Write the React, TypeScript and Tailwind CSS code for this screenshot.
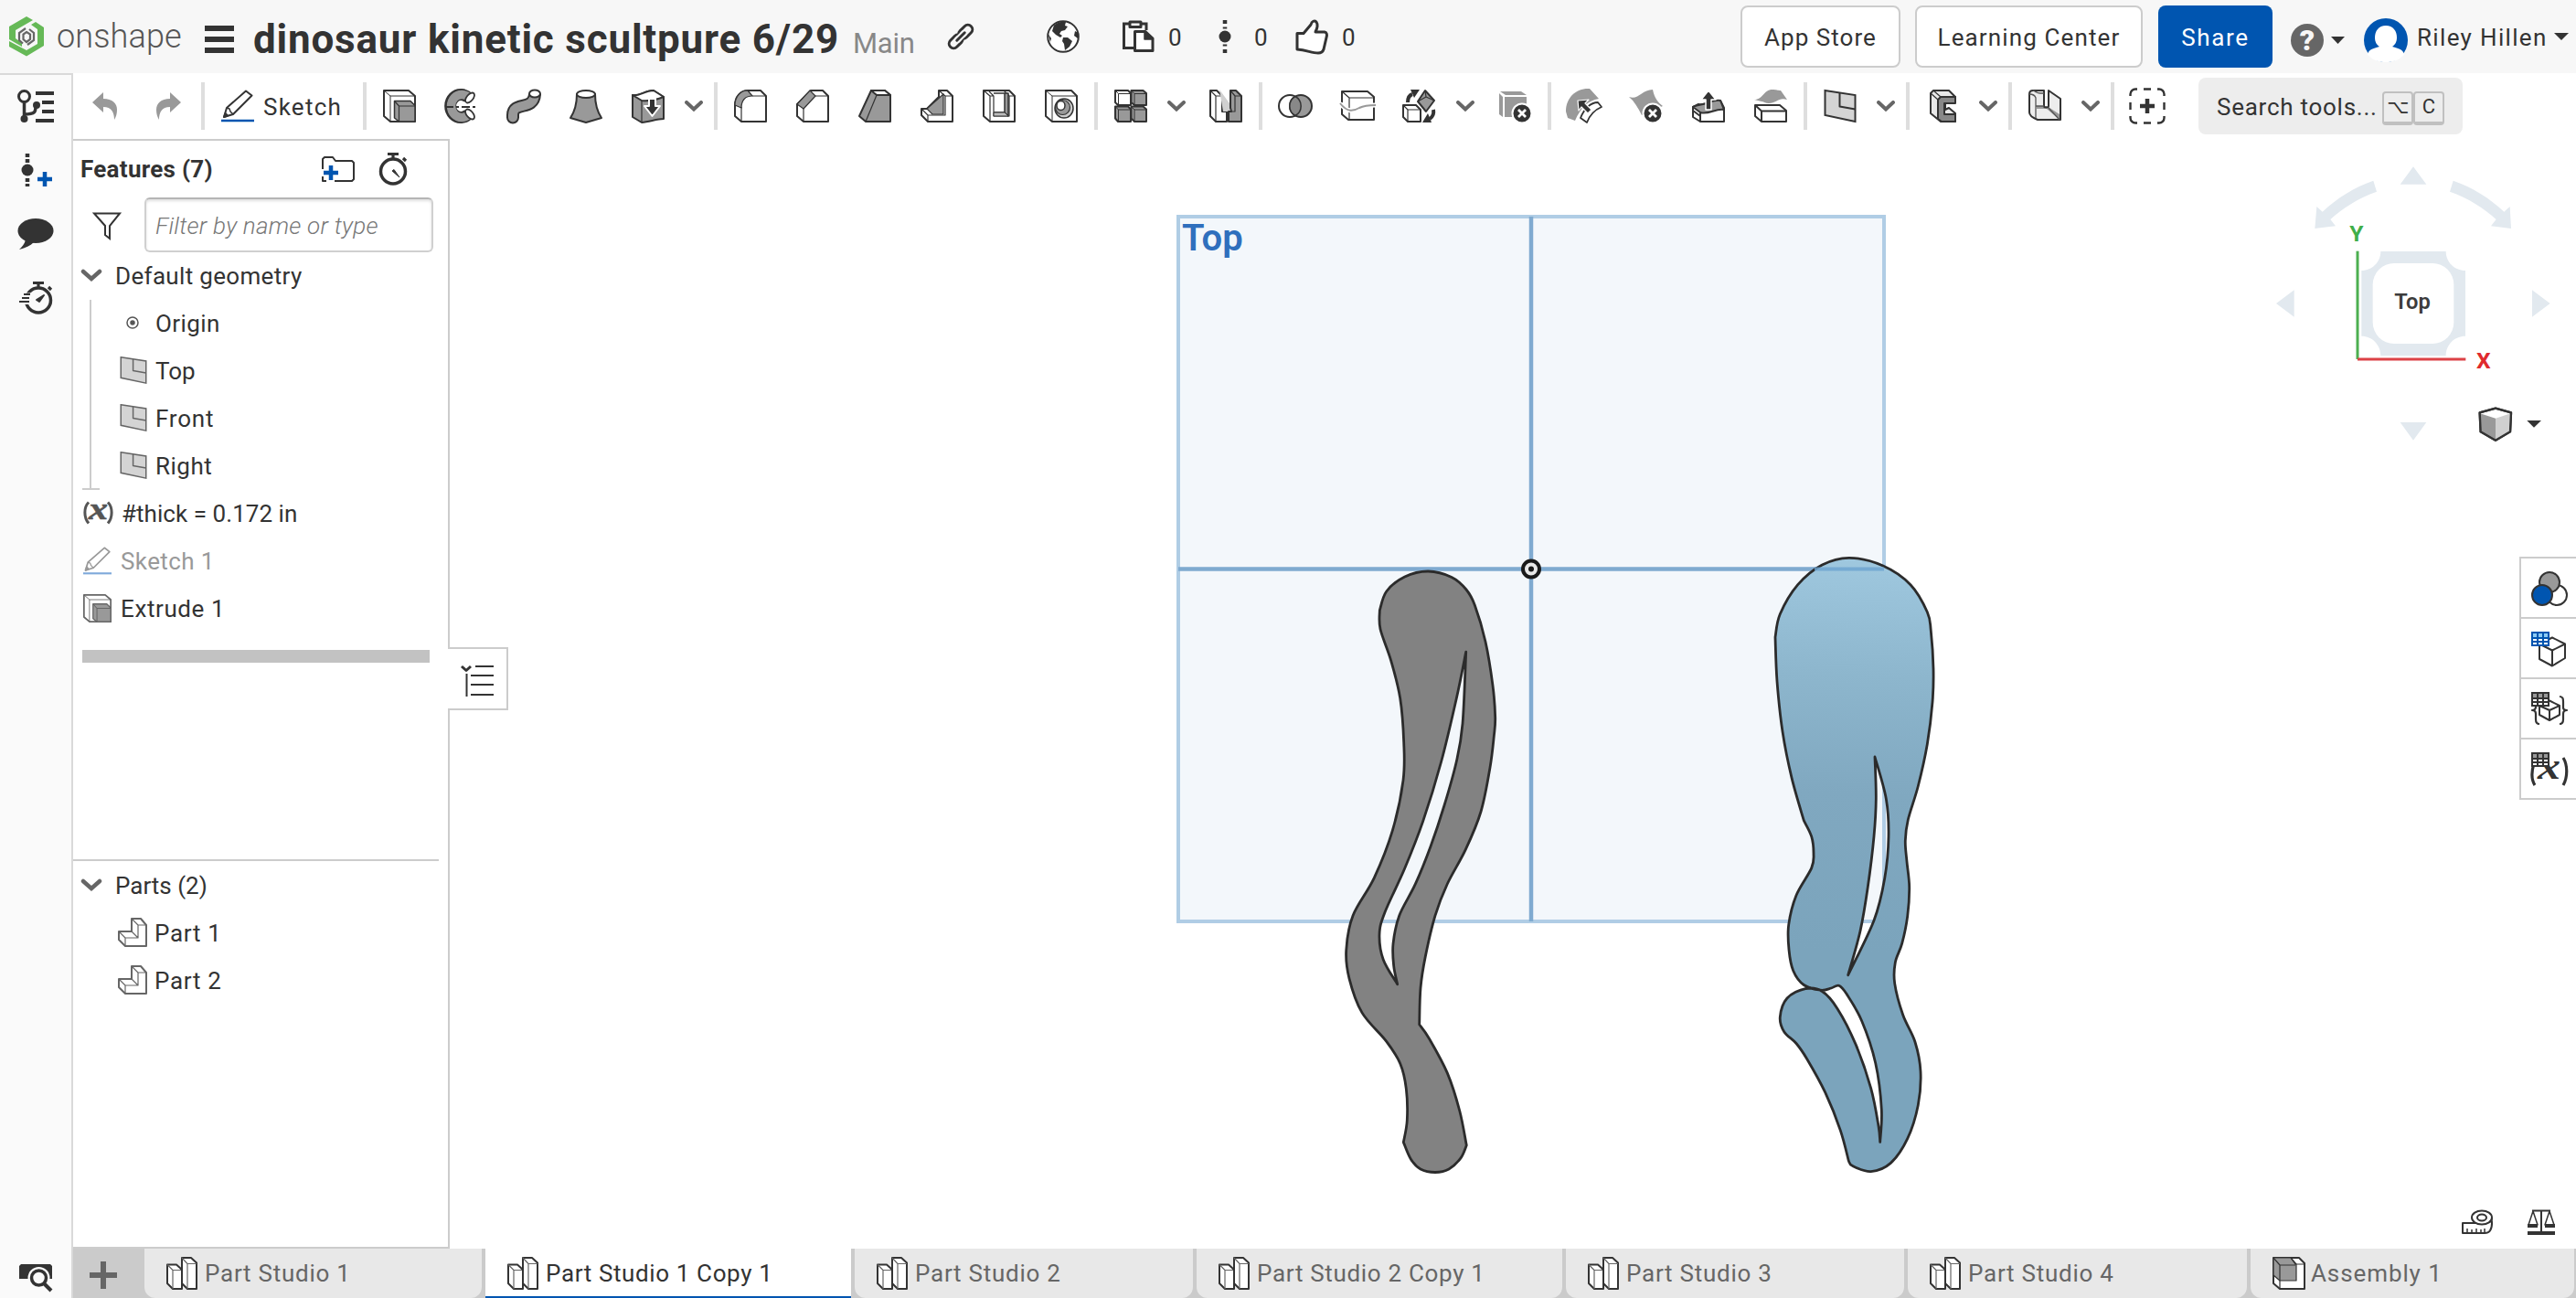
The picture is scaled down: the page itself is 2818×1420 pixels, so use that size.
import type { ReactNode } from 'react';

type Pt = [number, number];

/* Catmull-Rom spline through the points of one smooth run, as cubic segments. */
function run(p: Pt[]): string {
  let d = '';
  for (let i = 0; i < p.length - 1; i++) {
    const a = p[i - 1] ?? p[i], b = p[i], c = p[i + 1], e = p[i + 2] ?? p[i + 1];
    d += `C${b[0] + (c[0] - a[0]) / 6} ${b[1] + (c[1] - a[1]) / 6} ${c[0] - (e[0] - b[0]) / 6} ${c[1] - (e[1] - b[1]) / 6} ${c[0]} ${c[1]}`;
  }
  return d;
}
const outline = (runs: Pt[][]) =>
  `M${runs[0][0][0]} ${runs[0][0][1]}` + runs.map((r, i) => run(i ? [runs[i - 1][runs[i - 1].length - 1], ...r] : r)).join('') + 'Z';

const LEG_A = outline([
  [[1509.3, 667.7], [1516.7, 647], [1536.7, 631], [1562.3, 625], [1588, 631.5], [1604, 645], [1613.3, 662], [1625, 702], [1633, 750], [1635.7, 784.7], [1634.3, 805.4], [1630, 839.8], [1620, 888], [1603.3, 929.4], [1583.3, 967], [1570, 1001.7], [1559.3, 1046.4], [1554, 1080.9], [1552.7, 1120.8]],
  [[1563.3, 1136], [1583.3, 1173.9], [1596.7, 1215], [1604.3, 1253]],
  [[1598, 1266.8], [1585, 1279], [1570, 1282.5], [1554, 1279], [1543.3, 1268], [1535.3, 1249.6]],
  [[1539.3, 1225.5], [1538.3, 1191], [1531.7, 1163.5], [1516.7, 1139.4], [1490, 1107.9], [1476, 1070.6], [1472.7, 1039.6], [1480, 1001.7], [1503.3, 960.4], [1523.3, 908.7], [1535, 853.6], [1535.7, 812.3], [1531.7, 764], [1521.7, 722.8], [1510, 688.3], [1509.3, 667.7]],
]);
const SLIT_A = outline([
  [[1603.7, 713.1], [1593.3, 764], [1576.7, 833], [1556.7, 898.4], [1536.7, 950], [1515, 998], [1509, 1022.3], [1513.3, 1049.9], [1528.7, 1076.7]],
  [[1524.7, 1056.8], [1524, 1032.7], [1530.7, 1001.7], [1548.3, 967.2], [1565, 925.9], [1580, 881], [1593.3, 833], [1600, 791.6], [1603.7, 713.1]],
]);
const LEG_B = outline([
  [[1942, 697], [1947.3, 671.8], [1966.7, 639.7], [1993.3, 618], [2023.3, 610.3], [2060, 619], [2090, 639.7], [2108.3, 669.5], [2112.3, 690.2], [2115, 731.5], [2114, 768.2], [2108.3, 814.2], [2098.3, 860], [2087.3, 896.8], [2084.3, 919.8], [2086, 942.7], [2088.7, 970.3], [2086.7, 1002.4], [2080.7, 1032.2], [2073.3, 1052.9], [2072.7, 1075.9], [2081.7, 1110.3], [2095, 1140], [2101, 1172.3], [2098.3, 1209], [2086.7, 1245.7], [2068.3, 1272.4], [2046.7, 1281.6], [2026.7, 1275.6], [2022.3, 1270]],
  [[2013.3, 1236.6], [1996.7, 1195.2], [1976.7, 1158.5], [1965, 1141.5], [1951.7, 1128.7], [1947.3, 1112.6], [1955, 1092], [1975, 1081.6], [1993.3, 1084.5], [2010, 1103.4], [2030, 1142.4], [2046.7, 1190.7], [2055, 1232], [2056.7, 1249.4]],
  [[2058.3, 1213.6], [2051.7, 1163], [2036.7, 1117], [2020, 1087.3], [2011.7, 1078.2], [2003.3, 1081], [1991.7, 1083.2], [1973.3, 1077.5], [1961.7, 1062], [1957, 1039], [1956.7, 1011.6], [1965, 979.4], [1981.7, 949.6], [1984, 933.5], [1981.7, 915.2], [1973.3, 897.7]],
  [[1960, 850.9], [1950, 800.4], [1944, 745.3], [1942, 697]],
]);
const SLIT_B = outline([
  [[2051, 828], [2063.3, 873.8], [2066, 915.2], [2061.7, 961], [2050, 1007], [2021.7, 1066.7]],
  [[2035, 1018.5], [2043.3, 970.3], [2050, 915], [2052.3, 873.8], [2051, 828]],
]);

function Ic({ children, w = 'w-9', h = 'h-9', box = '0 0 36 36', sw = 2 }: { children: ReactNode; w?: string; h?: string; box?: string; sw?: number }) {
  return (
    <svg className={`${w} ${h} shrink-0 overflow-visible`} viewBox={box} fill="none" stroke="#333" strokeWidth={sw} strokeLinejoin="round">
      {children}
    </svg>
  );
}

const Tool = ({ children }: { children: ReactNode }) => <button className="flex w-[68px] shrink-0 justify-center">{children}</button>;
const Sep = () => <div className="mx-0.5 h-[52px] w-1 shrink-0 bg-[#dedede]" />;
const Chev = () => (
  <button className="w-9 shrink-0 pl-1.5">
    <svg className="h-3 w-5" viewBox="0 0 20 12" fill="none" stroke="#666" strokeWidth="4" strokeLinecap="round"><path d="M2 2 10 9.5 18 2" /></svg>
  </button>
);

const G = '#999';
const dark = { fill: '#333', stroke: 'none' };
const gray = { fill: G, stroke: 'none' };

const Extrude = ({ c = '#333' }: { c?: string }) => (
  <g stroke={c}>
    <path d="M1 1H28L35 7V35H8L1 29Z" fill="#fff" />
    <path d="M1 1 8 7H35M8 7V35" strokeWidth="1" />
    <path d="M12.5 12.500H30L35 17.500V35H17.500L12.500 31Z" fill={G} strokeWidth="1.5" />
    <path d="M12.500 12.500 17.500 18H35M17.500 18V35" strokeWidth="1.2" />
  </g>
);
const Pencil = ({ c = '#333', b = '#0055b0' }: { c?: string; b?: string }) => (
  <>
    <g stroke={c} strokeWidth="2"><path d="M3 30 6 20 27 1.500 33.500 6.500 13 27Z" fill="#fff" /><path d="M6 20 9 21 10 24 13 27" strokeWidth="1.5" /><path d="M3 30 4.500 26 7 28.500Z" fill={c} /></g>
    <path d="M0 34H36" stroke={b} strokeWidth="2.500" />
  </>
);
const PlaneIcon = ({ c = '#333' }: { c?: string }) => (
  <g stroke={c}><path d="M1.500 1 34.500 6V35L1.500 28Z" fill="#d4d4d4" strokeLinejoin="miter" /><path d="M17.500 3.500V18.500L34.500 21.500" /></g>
);
const StudioIcon = () => (
  <Ic w="w-[34px]" box="0 0 34 36">
    <path d="M1 8.500H11L17 14V35H7L1 29Z" fill="#fff" /><path d="M1 8.500 7 14.500H16M7 14.500V35" strokeWidth="1.200" stroke="#666" />
    <path d="M17 1H27L33 6.500V35H23L17 29Z" fill="#fff" /><path d="M17 1 23 7.500H33M23 7.500V35" strokeWidth="1.200" stroke="#666" />
  </Ic>
);
const X = () => <><circle cx="26" cy="26" r="10.500" fill="#333" stroke="#fff" /><path d="m22 22 8 8M30 22l-8 8" stroke="#fff" strokeWidth="2.800" /></>;

function Header() {
  return (
    <header className="flex h-20 shrink-0 items-center bg-[#f7f7f7] pl-2.5 pr-2 text-[26px] text-[#333]">
      <svg className="h-11 w-[38px] shrink-0" viewBox="0 0 38 44">
        <path d="M0 11 19 0 26 4 7 15V24L14 29V33L0 25Z" fill="#66b957" />
        <path d="M24 9 29 6 38 12V32L19 43.500 0 33V27L19 37 31 30V14Z" fill="#66b957" />
        <path d="M18 13 11 18V26L15 29.500M20 31 27 26V18L22 14" fill="none" stroke="#666" strokeWidth="2.200" />
        <path d="M19 17 23 19.500V25L19 28 15.500 25V19.500Z" fill="none" stroke="#666" strokeWidth="2.200" />
      </svg>
      <span className="ml-3.5 w-[162px] shrink-0 text-[36px] font-light leading-10 tracking-[0.12px] text-[#555]">onshape</span>
      <div className="flex w-8 shrink-0 flex-col gap-1.5 pt-1.5"><i className="h-1.5 bg-[#333]" /><i className="h-1.5 bg-[#333]" /><i className="h-1.5 bg-[#333]" /></div>
      <div className="ml-[21px] flex w-[760px] shrink-0 items-baseline pt-1.5">
        <h1 className="w-[656px] whitespace-nowrap text-[44px] font-bold leading-none tracking-[0.8px]">dinosaur kinetic scultpure 6/29</h1>
        <span className="text-[31px] leading-none tracking-[-0.2px] text-[#888]">Main</span>
      </div>
      <Ic w="w-7" h="h-7" box="0 0 28 28" sw={3}>
        <g transform="rotate(-45 14 14)"><rect x="-2" y="9" width="17" height="10" rx="5" /><rect x="13" y="9" width="17" height="10" rx="5" /><path d="M8 14h12" stroke="#f7f7f7" strokeWidth="7" /><path d="M8 14h12" strokeWidth="3" strokeLinecap="round" /></g>
      </Ic>
      <span className="w-20 shrink-0" />
      <Ic>
        <circle cx="18" cy="18" r="16.800" fill="#fff" />
        <path d="M8 5.500C12 2 17 1 21 2L20 6 23 7 20 11 16 12 14 15 17 17 15 19 10 16 6 12Z M18 19 23 19 28 23 25 29 20 33 19 26 17 23Z M35 14 31 12 30 17 34 20Z M1.500 15 5 20 4 24Z" {...dark} />
      </Ic>
      <span className="w-[47px] shrink-0" />
      <Ic w="w-[35px]" box="0 0 35 36" sw={3}>
        <path d="M7 4H1.500V30.500H12M21 4H26V11" strokeLinejoin="miter" /><path d="M8 2H20V7.500H8Z" fill="#fff" />
        <path d="M13.500 12.500H25L33 20V33.500H13.500Z" fill="#fff" /><path d="M24 12V21H33Z" fill="#333" strokeWidth="1.500" />
      </Ic>
      <span className="ml-[15px] w-[53px] shrink-0 pt-0.5">0</span>
      <Ic w="w-[18px]" box="0 0 18 36"><path d="M9 0V36" strokeWidth="4.500" strokeDasharray="4 3.500 2 17 2 3.500 4" /><circle cx="9" cy="18" r="6.500" {...dark} /></Ic>
      <span className="ml-[23px] w-[45px] shrink-0 pt-0.5">0</span>
      <Ic h="h-[38px]" box="0 0 36 38" sw={3}>
        <path d="M2 15.500H9L17 6C18 2 21 1 23 3 25 6 24 10 22 14H32C34.500 14.500 35 17 34 20L31 33C30 36 28 37 25 37 18 37 13 34 2 33Z" fill="#fff" />
      </Ic>
      <span className="ml-[15px] pt-0.5">0</span>
      <div className="ml-auto flex items-center">
        <button className="h-[68px] w-[175px] rounded-lg border-2 border-[#ccc] bg-white pt-0.5 tracking-[1.04px]">App Store</button>
        <button className="ml-4 h-[68px] w-[249px] rounded-lg border-2 border-[#ccc] bg-white pt-0.5 tracking-[1.13px]">Learning Center</button>
        <button className="ml-[17px] h-[68px] w-[125px] rounded-lg bg-[#0055b0] pt-0.5 tracking-[1.63px] text-white">Share</button>
        <span className="ml-5 mt-2 flex size-9 items-center justify-center rounded-full bg-[#666] text-[32px] font-black leading-none text-[#f7f7f7]">?</span>
        <svg className="ml-2 mt-2 h-2 w-[15px]" viewBox="0 0 15 8"><path d="M0 0H15L7.500 8Z" fill="#333" /></svg>
        <svg className="ml-[21px] mt-2 size-12" viewBox="0 0 48 48">
          <circle cx="24" cy="24" r="24" fill="#0055b0" />
          <path d="M24 8C32 8 36 14 36 21 36 26 34 29 31 31 38 33 43 34 44 40 38 46 32 48 24 48 16 48 10 46 4 40 5 34 10 33 17 31 14 29 12 26 12 21 12 14 16 8 24 8Z" fill="#fff" />
        </svg>
        <span className="ml-[10px] w-[150px] whitespace-nowrap pt-0.5 tracking-[1.33px]">Riley Hillen</span>
        <svg className="h-2 w-4" viewBox="0 0 16 8"><path d="M0 0H16L8 8Z" fill="#333" /></svg>
      </div>
    </header>
  );
}

function ToolbarModeling() {
  return (
    <>
      <button className="flex w-[68px] shrink-0 justify-center"><svg className="h-[30px] w-[27px]" viewBox="0 0 27 30"><path d="M0 11 12 0V7C22 7 27 12 27 19 27 23 26 27 24 30 24 22 21 16 12 16V22Z" fill={G} /></svg></button>
      <button className="flex w-[70px] shrink-0 justify-center pl-0.5"><svg className="h-[30px] w-[27px] -scale-x-100" viewBox="0 0 27 30"><path d="M0 11 12 0V7C22 7 27 12 27 19 27 23 26 27 24 30 24 22 21 16 12 16V22Z" fill={G} /></svg></button>
      <Sep />
      <button className="flex w-[169px] shrink-0 items-center pl-4"><Ic><Pencil /></Ic><span className="ml-2.5 pt-0.5 tracking-[1.25px]">Sketch</span></button>
      <Sep />
      <Tool><Ic><Extrude /></Ic></Tool>
      <Tool><Ic>
        <path d="M26 10A11.500 12.500 0 1 0 26 26" stroke="#333" strokeWidth="13" /><path d="M26.500 9.500A11.500 12.500 0 1 0 26.500 26.500" stroke={G} strokeWidth="9.500" />
        <ellipse cx="27" cy="9" rx="3.500" ry="6.500" transform="rotate(40 27 9)" fill="#fff" strokeWidth="1.800" /><ellipse cx="27" cy="27" rx="3.500" ry="6.500" transform="rotate(-40 27 27)" fill="#fff" strokeWidth="1.800" />
        <circle cx="19" cy="18" r="5" fill="#fff" stroke="none" /><path d="M0 19H36" strokeWidth="1.800" strokeDasharray="9 3 3 3" />
      </Ic></Tool>
      <Tool><Ic w="w-[38px]" box="0 0 38 36">
        <g strokeLinecap="round"><path d="M7 30.500V28C7 12 30 24 31 5" strokeWidth="14" /><path d="M7 30.500V28C7 12 30 24 31 5" stroke={G} strokeWidth="10" /></g>
        <path d="M22 -4H40V5H22Z" fill="#fff" stroke="none" /><ellipse cx="31" cy="4.500" rx="6" ry="4" fill="#fff" />
      </Ic></Tool>
      <Tool><Ic><path d="M8 5C8 17 5 25 1 31L18 36 35 31C31 25 28 17 28 5Z" fill={G} /><ellipse cx="18" cy="5" rx="10" ry="4" fill="#fff" /></Ic></Tool>
      <Tool><Ic><path d="M1 6C8 8 14 1 24 1L35 8V32C28 32 20 35 11 36L1 30Z" fill={G} /><path d="M1 6C8 8 14 1 24 1L35 8C28 11 22 13 11 12Z" fill="#fff" /><path d="M11 12V36" strokeWidth="1.200" /><path d="M19 10H26V18H31L22.500 29 14 18H19Z" fill="#333" stroke="#fff" /></Ic></Tool>
      <Chev />
      <Sep />
      <Tool><Ic><path d="M1 17C1 8 7 1 15 1H29L35 7V35H8L1 29Z" fill="#fff" /><path d="M1 17C1 8 7 1 15 1L20 7C12 7 8 12 8 20Z" fill={G} strokeWidth="1.200" /><path d="M20 7H35M8 19V35" strokeWidth="1.200" /></Ic></Tool>
      <Tool><Ic><path d="M1 16 16 1H29L35 7V35H8L1 29Z" fill="#fff" /><path d="M1 16 15 1 21 7 8 21Z" fill={G} strokeWidth="1.200" /><path d="M20 7H35M8 20V35" strokeWidth="1.200" /></Ic></Tool>
      <Tool><Ic><path d="M14 1H29L35 6V35H8L1 29Z" fill={G} /><path d="M14 1H29L35 6H20Z" fill="#fff" /><path d="M20 6 8 35" strokeWidth="1.200" /></Ic></Tool>
      <Tool><Ic><path d="M20 1H29L35 7V35H8L1 28V21H7L20 8Z" fill="#fff" /><path d="M7 21 25 5V27H13Z" fill={G} strokeWidth="1.200" /><path d="M20 1 27 7H35M27 7V28H8V35M1 21 8 28" strokeWidth="1.200" /></Ic></Tool>
      <Tool><Ic><path d="M1 1H29L35 7V35H8L1 29Z" fill="#fff" /><path d="M1 1 8 7H12V29H29V7H35M8 7V35M12 7 7 2M29 7 23 1" strokeWidth="1.200" /><path d="M12 4H28V29L24 25V4M12 25H24" fill={G} strokeWidth="1.500" /><path d="M12 25V29H28L24 25Z" fill="#bbb" strokeWidth="1" /></Ic></Tool>
      <Tool><Ic><path d="M1 1H29L35 7V35H8L1 29Z" fill="#fff" /><path d="M1 1 8 7H35M8 7V35" strokeWidth="1" /><ellipse cx="21" cy="20.500" rx="10" ry="10.500" fill="#ccc" strokeWidth="1.500" /><ellipse cx="19.500" cy="19.500" rx="8" ry="8" fill={G} strokeWidth="1.200" /><ellipse cx="17.500" cy="17.500" rx="4.500" ry="5" fill="#fff" strokeWidth="1.500" /></Ic></Tool>
      <Sep />
      <Tool><Ic>
        <path d="M1 1H15L18 4V17H4L1 14Z" fill="#fff" /><path d="M18.500 1H31.500L35 4V17H22L18.500 14Z" fill={G} /><path d="M1 18.500H15L18 21.500V35H4L1 31.500Z" fill={G} /><path d="M18.500 18.500H31.500L35 21.500V35H22L18.500 31.500Z" fill={G} />
        <path d="M1 1 4.500 4.500H18M4.500 4.500V17M18.500 1 22 4.500H35M22 4.500V17M1 18.500 4.500 22H18M4.500 22V35M18.500 18.500 22 22H35M22 22V35" strokeWidth="1" />
      </Ic></Tool>
      <Chev />
    </>
  );
}

function ToolbarEditing() {
  return (
    <>
      <Tool><Ic>
        <path d="M1 1H8L14 7V24H19V35H7L1 29Z" fill="#fff" /><path d="M1 1 7 7H14M7 7V35" strokeWidth="1.200" />
        <path d="M11 0 22 15V24H15Z" fill="#d0d0d0" stroke="none" />
        <path d="M23 1H29L35 7V35H21V24H24L23 20Z" fill={G} /><path d="M23 1 28 7H35M28 7V24H21" strokeWidth="1.200" />
      </Ic></Tool>
      <Sep />
      <Tool><Ic w="w-[38px]" box="0 0 38 36"><circle cx="13" cy="18" r="12" fill="#fff" /><circle cx="25" cy="18" r="12" fill={G} /><path d="M19 7.500A12 12 0 0 1 19 28.500 12 12 0 0 1 19 7.500Z" fill="#888" strokeWidth="1.500" /></Ic></Tool>
      <Tool><Ic w="w-[39px]" box="0 0 39 36"><path d="M2 2H30L37 8V33H9L2 27Z" fill="#fff" /><path d="M2 2 10 9H37M10 9V33" strokeWidth="1.200" /><path d="M0 15C8 25 14 24 21 20 27 17 32 17 39 17" stroke="#fff" strokeWidth="5" /><path d="M0 15C8 25 14 24 21 20 27 17 32 17 39 17" stroke={G} /></Ic></Tool>
      <Tool><Ic>
        <path d="M0 17H14L19 22V35H5L0 30Z" fill="#fff" /><path d="M0 17 5 22H19M5 22V35" strokeWidth="1.200" /><path d="M24 1 34 12 25 24 16 13Z" fill={G} /><path d="m24 1 1 7 9 4M25 8l-9 5" strokeWidth="1.200" />
        <path d="M5 14C5 9 7 6 10 5" strokeWidth="4" /><path d="M8 0H18L12 9Z" {...dark} /><path d="M33 22C34 27 32 30 29 32" strokeWidth="4" /><path d="M31 36H21L27 26Z" {...dark} />
      </Ic></Tool>
      <Chev />
      <Tool><Ic><path d="M2 2H25L31 6H8Z M1 4 5 8V30L1 27Z M7 8H31V30H7Z" {...gray} /><X /></Ic></Tool>
      <Sep />
      <Tool><Ic w="w-10" box="0 0 40 36"><path d="M0 24C0 8 12 -2 26 -1L36 10C24 12 16 20 10 34L2 31Z" {...gray} /><path d="M16 31C20 21 27 14 35 14L39 19C32 22 26 28 23 36Z" fill="#fff" strokeWidth="1.800" /><path d="M13 12 25 11 21 15 28 22 24 26 17 19 14 23Z" fill="#333" stroke="#fff" strokeWidth="1.200" /></Ic></Tool>
      <Tool><Ic w="w-[38px]" box="0 0 38 36"><path d="M0 8C10 12 14 0 26 0 28 10 32 14 37 18L14 28C10 20 6 13 0 8Z" {...gray} /><X /></Ic></Tool>
      <Tool><Ic><path d="M1 23 9 29V35H35V20L31 12C20 12 16 18 7 16L1 19Z" fill="#fff" /><path d="M1 19C8 16 12 17 18 14 24 12 28 11 31 12L35 22C26 20 18 28 9 25Z" fill={G} /><path d="M1 19V30L9 35M9 25V35" /><path d="M15 22V11H10L18 1 26 11H21V22Z" fill="#333" stroke="#fff" strokeWidth="1.500" /></Ic></Tool>
      <Tool><Ic><path d="M1 17H28L35 23V35H8L1 29Z" fill="#fff" /><path d="M1 17 8 23.500H35M8 23.500V35" /><path d="M0 11C10 11 10 0 20 0 25 0 25 1 29 1L36 11C27 8 24 15 16 15 12 15 10 13 8 13Z" {...gray} /></Ic></Tool>
      <Sep />
      <Tool><Ic><PlaneIcon /></Ic></Tool>
      <Chev />
      <Sep />
      <Tool><Ic><path d="M5 4 8 1H25L32 8V14H21V22L25 20 32 26V35H16L5 26Z" fill="#e8e8e8" /><path d="M13 11 16 8H32V15H20V27H32V35H17L13 32Z" fill="#888" /><path d="M5 4 13 11M8 1 16 8M13 11V32" strokeWidth="1.200" /></Ic></Tool>
      <Chev />
      <Sep />
      <Tool><Ic>
        <path d="M1 5C1 2 3 1 5 1H17V19H21V1L35 10V33H10C5 31 1 28 1 25Z" fill="#ededed" stroke="none" />
        <path d="M9 18H20L34 27V33L20 21H9Z" {...gray} />
        <path d="M1 5C1 2 3 1 5 1H17V18C17 20 22 20 22 18V1L35 10V33H10C5 31 1 28 1 25Z" />
        <path d="M1 5C5 5 7 6 8 9V31M5 1C8 2 9 4 13 4H17M8 18H17M22 20 34 33" strokeWidth="1.300" stroke="#555" />
      </Ic></Tool>
      <Chev />
      <Sep />
      <Tool><Ic w="w-10" h="h-10" box="0 0 40 40"><path d="M1.500 9V7C1.500 4 4 1.500 7 1.500H9M16 1.500H24M31 1.500H33C36 1.500 38.500 4 38.500 7V9M38.500 16V24M38.500 31V33C38.500 36 36 38.500 33 38.500H31M24 38.500H16M9 38.500H7C4 38.500 1.500 36 1.500 33V31M1.500 24V16" strokeWidth="2.400" /><path d="M12 20H28M20 12V28" strokeWidth="4.500" /></Ic></Tool>
      <div className="ml-[22px] flex h-[62px] w-[289px] shrink-0 items-center rounded-lg bg-[#ededed] pl-5">
        <span className="w-[181px] whitespace-nowrap pt-0.5 tracking-[0.74px]">Search tools...</span>
        <kbd className="mt-1 flex h-[37px] w-[34px] items-center justify-center overflow-hidden rounded border-2 border-b-4 border-[#c0c0c0] font-['DejaVu_Sans'] text-[21px] leading-none">⌥</kbd>
        <kbd className="mt-1 flex h-[37px] w-[34px] items-center justify-center rounded border-2 border-b-4 border-[#c0c0c0] font-['Roboto'] text-[22px] leading-none">C</kbd>
      </div>
    </>
  );
}

const Watch = ({ fast = false }: { fast?: boolean }) => (
  <Ic>
    <circle cx={fast ? 21 : 18} cy="20.500" r="13.500" strokeWidth="3.500" />
    <path d={fast ? 'M15 1.500H27M21 1V7M32 6 35 9' : 'M12 1.500H24M18 1V7M29 6 32 9'} strokeWidth="3.200" />
    {fast ? (
      <><path d="M0 12.500H13V25H0Z" fill="#fafafa" stroke="none" /><path d="M5 14H12M3 18H11M0 22H11" strokeWidth="1.800" /><path d="M27 15 22 22 19 20Z" fill="#333" /></>
    ) : <path d="M17 20 19 18.500 25 27Z" fill="#333" strokeWidth="1" />}
  </Ic>
);

function Sidebar() {
  return (
    <aside className="flex w-20 shrink-0 flex-col items-center border-r-2 border-t-2 border-[#d9d9d9] bg-[#fafafa] pb-[7px] pt-4">
      <Ic w="w-10" box="0 0 40 36" sw={3}><circle cx="7.500" cy="7.500" r="6" /><path d="M7.500 14V30M7.500 27C20 27 20 24 20 18" strokeWidth="3.500" /><circle cx="7.500" cy="32" r="4" {...dark} /><circle cx="21" cy="17" r="4" {...dark} /><path d="M20 4H40M27 14H40M27 24H40M20 34H40" strokeWidth="4" /></Ic>
      <div className="mt-[34px]"><Ic><path d="M9 0V4M9 6V10M9 27V31M9 33V36" strokeWidth="4.500" /><circle cx="9" cy="18" r="6.500" {...dark} /><path d="M20 28H36M28 20V36" stroke="#0055b0" strokeWidth="4.500" /></Ic></div>
      <div className="mt-[34px]"><Ic w="w-10" box="0 0 40 36"><ellipse cx="20" cy="14.500" rx="19.500" ry="13.500" {...dark} /><path d="M9 24C8 29 5 32 2 35 9 33 14 31 18 27Z" {...dark} /></Ic></div>
      <div className="mt-[34px]"><Watch fast /></div>
      <div className="mt-auto"><Ic h="h-[30px]" box="0 0 36 30"><path d="M2 0H34L36 2V16H33A11 11 0 0 0 11 16H0V2Z" {...dark} /><circle cx="21.500" cy="15" r="12" fill="#fafafa" stroke="none" /><circle cx="21.500" cy="15" r="8" strokeWidth="3.500" /><path d="m27 21 8 8" strokeWidth="4" /></Ic></div>
    </aside>
  );
}

const DownChev = () => <svg className="ml-2 h-4 w-6 shrink-0" viewBox="0 0 24 16" fill="none" stroke="#666" strokeWidth="4.500" strokeLinecap="round"><path d="M3 4 12 12 21 4" /></svg>;
const Row = ({ children }: { children: ReactNode }) => <div className="flex h-[52px] items-center whitespace-nowrap">{children}</div>;
const GeoRow = ({ name, cls }: { name: string; cls: string }) => (
  <Row><span className="ml-[51px] flex w-[31px]"><Ic w="w-[30px]" h="h-[30px]" sw={1.8}><PlaneIcon c="#666" /></Ic></span><span className={cls}>{name}</span></Row>
);
const PartRow = ({ name }: { name: string }) => (
  <Row>
    <span className="ml-[49px] w-[40px]"><Ic w="w-8" h="h-8" box="0 0 32 32"><g stroke="#666"><path d="M15 1H25L31 8V31H8L1 24V15H15Z" fill="#fff" /><path d="M15 1 22 8H31M22 8V22L15 15M1 15 8 22H22M8 22V31" strokeWidth="1.200" /></g></Ic></span>
    <span className="pt-0.5 tracking-[0.7px]">{name}</span>
  </Row>
);

function FeaturePanel() {
  return (
    <section className="relative flex w-[412px] shrink-0 flex-col border-b-2 border-r-2 border-t-2 border-[#ccc] bg-white text-[26px] text-[#333]">
      <div className="flex h-[60px] items-center pl-2 pt-0.5">
        <h2 className="w-[264px] font-bold tracking-[0.28px]">Features (7)</h2>
        <Ic h="h-7" box="0 0 36 28"><path d="M1 14V3L3 1H12L15 5H33L35 7V25L33 27H14M1 22V27H5" /><path d="M2 18H18M10 10V26" stroke="#0055b0" strokeWidth="4.500" /></Ic>
        <div className="ml-6"><Watch /></div>
      </div>
      <div className="flex h-[61px] items-start pt-0.5">
        <div className="ml-[22px] mt-4"><Ic w="w-[30px]" h="h-[30px]" box="0 0 30 30"><path d="M1 1.500H29L18 15V29L13 25V15Z" strokeLinejoin="miter" /></Ic></div>
        <div className="ml-[26px] flex h-[60px] w-[316px] items-center rounded-md border-2 border-[#d0d0d0] border-t-[#b5b5b5] bg-white pl-2.5 pt-0.5 font-light italic tracking-[0.23px] text-[#777] shadow-[inset_0_2px_3px_rgba(0,0,0,0.12)]">Filter by name or type</div>
      </div>
      <div className="relative">
        <div className="absolute left-[18px] top-[53px] h-[207px] w-0.5 bg-[#ccc]" />
        <div className="absolute left-2.5 top-[259px] h-0.5 w-[19px] bg-[#ccc]" />
        <Row><DownChev /><span className="ml-[14px] pt-0.5 tracking-[0.33px]">Default geometry</span></Row>
        <Row><span className="ml-[58px] w-[32px]"><Ic w="w-3.5" h="h-3.5" box="0 0 14 14" sw={1.5}><g stroke="#555"><circle cx="7" cy="7" r="6" /><circle cx="7" cy="7" r="2" fill="#555" /></g></Ic></span><span className="pt-0.5 tracking-[0.41px]">Origin</span></Row>
        <GeoRow name="Top" cls="ml-2 pt-0.5" />
        <GeoRow name="Front" cls="ml-2 pt-0.5 tracking-[0.8px]" />
        <GeoRow name="Right" cls="ml-2 pt-0.5 tracking-[0.5px]" />
        <Row>
          <span className="ml-2.5 w-[43px]">
            <Ic w="w-[35px]" h="h-[26px]" box="0 0 35 26">
              <path d="M7 1.500C1.500 7 1.500 18 7 24.500M28 1.500C33.500 7 33.500 18 28 24.500" stroke="#555" strokeWidth="3" />
              <text x="7" y="20" fill="#555" stroke="#555" strokeWidth=".6" fontFamily="Liberation Serif" fontStyle="italic" fontWeight="700" fontSize="34" textLength="21" lengthAdjust="spacingAndGlyphs">x</text>
            </Ic>
          </span>
          <span className="pt-0.5 tracking-[0.05px]">#thick = 0.172 in</span>
        </Row>
        <Row><span className="ml-[11px] w-[41px]"><Ic w="w-[31px]" h="h-[31px]"><Pencil c="#999" b="#80aadb" /></Ic></span><span className="pt-0.5 tracking-[0.4px] text-[#999]">Sketch 1</span></Row>
        <Row><span className="ml-[11px] w-[41px]"><Ic w="w-[31px]" h="h-[31px]"><Extrude c="#666" /></Ic></span><span className="pt-0.5 tracking-[0.6px]">Extrude 1</span></Row>
      </div>
      <div className="ml-2.5 mt-5 h-3.5 w-[380px] bg-[#c2c2c2]" />
      <div className="mt-[215px] h-0.5 w-[400px] bg-[#ccc]" />
      <Row><DownChev /><span className="ml-[14px] pt-0.5">Parts (2)</span></Row>
      <PartRow name="Part 1" />
      <PartRow name="Part 2" />
    </section>
  );
}

function Model() {
  return (
    <svg className="absolute inset-0 size-full" viewBox="80 152 2738 1214" fill="none">
      <defs><linearGradient id="shade" x1="2035" y1="610" x2="2015" y2="1040" gradientUnits="userSpaceOnUse"><stop offset="0" stopColor="#9fc8df" /><stop offset=".3" stopColor="#8db6cd" /><stop offset=".6" stopColor="#80a8c0" /><stop offset="1" stopColor="#7ba4bc" /></linearGradient></defs>
      <rect x="1289" y="237" width="772" height="771" fill="#f3f7fb" stroke="#b0cde5" strokeWidth="4" />
      <path d="M1289 622.500H2061M1675 237V1008" stroke="#7faad0" strokeWidth="4.500" />
      <text x="1293" y="273.500" fill="#2f6fbd" fontFamily="Roboto" fontSize="40" fontWeight="600">Top</text>
      <g fillRule="evenodd" stroke="#2b2b2b" strokeWidth="2.800" strokeLinejoin="round">
        <path d={LEG_A + SLIT_A} fill="#828282" />
        <path d={LEG_B + SLIT_B} fill="url(#shade)" />
      </g>
      <path d="M1985 622.500H2061" stroke="#6ba3cf" strokeWidth="4" opacity=".8" />
      <circle cx="1675" cy="622.500" r="9" fill="#e8e8e8" stroke="#1a1a1a" strokeWidth="4" /><circle cx="1675" cy="622.500" r="3" fill="#1a1a1a" />
    </svg>
  );
}

function ViewCube() {
  return (
    <svg className="absolute right-0 top-2 h-[360px] w-[378px]" viewBox="0 0 1134 1080" fontFamily="Roboto" fontSize="74">
      <g fill="#e2e9ef">
        <path d="M600 67 643 125H557ZM150 516 209 472V560ZM1049 516 990 472V560ZM600 965 557 906H643Z" />
        <path d="M469 113 480 149C420 170 365 205 328 240L345 262 277 270 283 198 302 215C350 170 405 135 469 113Z" />
        <path d="M731 113 720 149C780 170 835 205 872 240L855 262 921 270 917 198 898 215C850 170 795 135 731 113Z" />
        <path d="M493 345H707C707 380 735 408 771 408V623C735 623 707 651 707 688H493C493 651 465 623 430 623V408C465 408 493 380 493 345Z" />
      </g>
      <rect x="467" y="384" width="266" height="264" rx="70" fill="#fff" />
      <text x="538" y="534" fill="#3c3c3c" fontWeight="600" fontSize="71">Top</text>
      <path d="M417 344V699" stroke="#4caf50" strokeWidth="9" /><path d="M417 699H772" stroke="#dc4146" strokeWidth="9" />
      <text x="391" y="312" fill="#3fae49" fontWeight="700">Y</text><text x="807" y="729" fill="#e02a2e" fontWeight="700">X</text>
      <g stroke="#333" strokeWidth="7" strokeLinejoin="round"><path d="M870 860 921 874 918 937 870 965 821 937 818 874Z" fill="#fff" /><path d="M870 893 819 877 822 935 870 962Z" fill="#999" stroke="none" /><path d="M870 893 919 877 917 935 870 962Z" fill="#d0d0d0" stroke="none" /><path d="M870 860 921 874 918 937 870 965 821 937 818 874Z" fill="none" /></g>
      <path d="M973 900H1020L996 923Z" fill="#333" />
    </svg>
  );
}

const Grid = ({ c, t }: { c: string; t: string }) => <g stroke="none"><rect x="0" y="0" width="20" height="16" fill={c} />{[2, 8, 14].map(x => <g key={x}><rect x={x} y="2" width="4" height="4" fill={t} /><rect x={x} y="8" width="4" height="2" fill="#fff" /><rect x={x} y="12" width="4" height="2" fill="#fff" /></g>)}</g>;
const CELL = 'flex h-[66px] items-center pl-[11px] pt-0.5 border-b-2 border-[#ccc]';

function RightDock() {
  return (
    <div className="absolute right-0 top-[457px] w-[62px] border-l-2 border-t-2 border-[#ccc] bg-white">
      <div className={CELL}><Ic w="w-10" h="h-[38px]" box="0 0 40 38"><circle cx="28" cy="26" r="11" fill="#fff" /><circle cx="20" cy="12" r="11" fill={G} /><circle cx="12" cy="26" r="11" fill="#0055b0" /></Ic></div>
      <div className={CELL}><Ic w="w-10" h="h-[38px]" box="0 0 40 38"><path d="M23 6.500 37 13.500V29L23 37.500 9 30V13.500ZM9 13.500 23 20.500 37 13.500M23 20.500V37.500" fill="#fff" /><Grid c="#0055b0" t="#8ccbf5" /></Ic></div>
      <div className={CELL}><Ic w="w-10" h="h-[38px]" box="0 0 40 38"><path d="M20 9.500 31 15V25L20 31 9 25V15ZM9 15 20 20 31 15M20 20V31" fill="#fff" /><path d="M31 5C35 5 35 8 35 11V17C35 19 36 20 39 20 36 20 35 22 35 24V30C35 33 34 35 31 35M9 35C6 35 5 33 5 30V24C5 22 4 20 1 20 4 20 5 19 5 16" strokeWidth="2.200" /><Grid c="#333" t={G} /></Ic></div>
      <div className={CELL}><Ic w="w-10" h="h-[38px]" box="0 0 40 38">
        <path d="M35 6C40 14 40 27 35 36M4 36C0 30 0 22 3 12" strokeWidth="3.200" />
        <text x="7" y="29" fill="#333" stroke="none" fontFamily="Liberation Serif" fontStyle="italic" fontWeight="700" fontSize="42" textLength="25" lengthAdjust="spacingAndGlyphs">x</text>
        <Grid c="#333" t={G} />
      </Ic></div>
    </div>
  );
}

const TABS = [
  { n: 'Part Studio 1', c: 'w-[369px] tracking-[0.75px]' },
  { n: 'Part Studio 1 Copy 1', c: 'w-[400px] tracking-[0.62px]' },
  { n: 'Part Studio 2', c: 'w-[370px] tracking-[0.75px]' },
  { n: 'Part Studio 2 Copy 1', c: 'w-[400px] tracking-[0.68px]' },
  { n: 'Part Studio 3', c: 'w-[370px] tracking-[0.75px]' },
  { n: 'Part Studio 4', c: 'w-[371px] tracking-[0.75px]' },
  { n: 'Assembly 1', c: 'w-[354px] tracking-[0.9px]' },
];

function TabBar() {
  return (
    <nav className="flex h-[54px] shrink-0 gap-1 bg-[#cbcbcb] text-[26px]">
      <button className="flex w-[74px] items-center justify-center pr-2 pt-1"><svg className="size-[30px]" viewBox="0 0 30 30"><path d="M0 15H30M15 0V30" stroke="#666" strokeWidth="6" /></svg></button>
      {TABS.map((t, i) => (
        <div key={t.n} className={`${t.c} ${i === 1 ? 'border-b-2 border-[#0055b0] bg-white pt-0.5 text-[#333]' : 'rounded-b-xl bg-[#e8e8e8] text-[#666]'} flex shrink-0 items-center whitespace-nowrap pl-6`}>
          {i === 6 ? (
            <Ic><path d="M1 1H29L35 7V35H8L1 29Z" fill="#fff" /><path d="M1 1H20L26 8V26H8L1 20Z" fill={G} strokeWidth="1.200" /><path d="M1 1 8 9H25M8 9V35M1 20V29M20 1 25 8H35" strokeWidth="1.200" /></Ic>
          ) : <StudioIcon />}
          <span className={i === 6 ? 'ml-1.5 pt-px' : 'ml-2 pt-px'}>{t.n}</span>
        </div>
      ))}
    </nav>
  );
}

export default function App() {
  return (
    <div className="flex h-[1420px] w-[2818px] flex-col overflow-hidden bg-white font-['Roboto',sans-serif]">
      <Header />
      <div className="flex min-h-0 flex-1">
        <Sidebar />
        <div className="flex min-w-0 flex-1 flex-col">
          <div className="flex h-[72px] shrink-0 items-center bg-white text-[26px] text-[#333]"><ToolbarModeling /><ToolbarEditing /></div>
          <main className="relative flex min-h-0 flex-1">
            <Model />
            <FeaturePanel />
            <button className="relative -ml-0.5 mt-[556px] h-[69px] w-[66px] border-2 border-l-0 border-[#ccc] bg-white pl-[14px] pt-1">
              <Ic w="w-9" h="h-9"><path d="M1 2 6 6.500 11 2" strokeWidth="3" /><path d="M16 2H36M11 12H36M11 22H36M11 33H36M6.500 10V35" /></Ic>
            </button>
            <ViewCube />
            <RightDock />
            <div className="absolute bottom-[15px] right-[23px] flex items-center gap-[38px]">
              <Ic w="w-[34px]" h="h-[26px]" box="0 0 34 26"><path d="M1 14H24C30 14 33 10 33 14 33 22 30 25 25 25H1Z" fill="#fff" /><ellipse cx="22" cy="8" rx="11" ry="7.500" fill="#fff" /><ellipse cx="22" cy="8" rx="5" ry="3.500" /><path d="M33 8V16M6 25V20M11 25V21M16 25V20M21 25V21M25 25V20" strokeWidth="1.500" /></Ic>
              <Ic w="w-[30px]" h="h-7" box="0 0 30 28"><path d="M5 1.500H25M15 1V25" /><path d="M6 2 1 17H11ZM24 2 19 17H29Z" strokeWidth="1.500" /><path d="M0 16H11V20H0ZM19 16H30V20H19ZM0 24H30V28H0Z" {...dark} /></Ic>
            </div>
          </main>
          <TabBar />
        </div>
      </div>
    </div>
  );
}
